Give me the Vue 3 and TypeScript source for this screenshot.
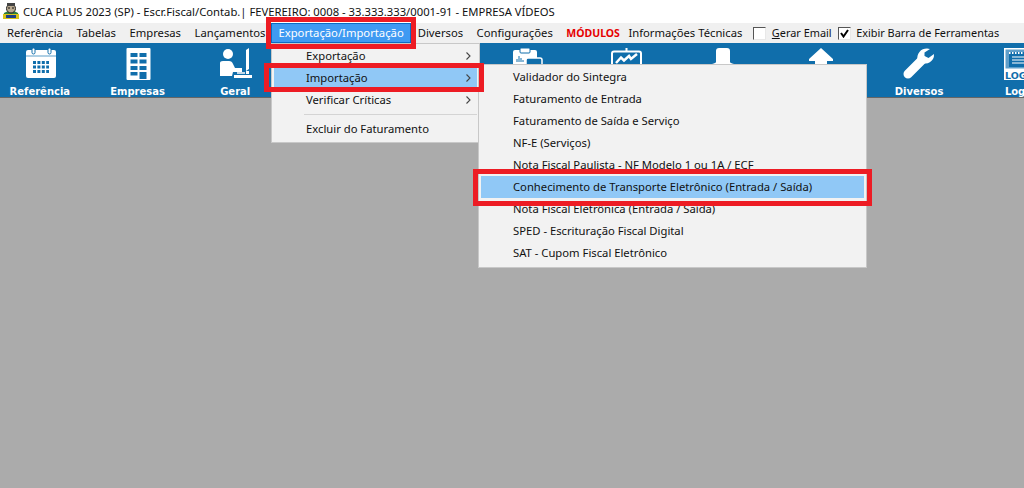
<script setup lang="ts">
const menus = ['Referência', 'Tabelas', 'Empresas', 'Lançamentos']
const sub = [
  'Validador do Sintegra',
  'Faturamento de Entrada',
  'Faturamento de Saída e Serviço',
  'NF-E (Serviços)',
  'Nota Fiscal Paulista - NF Modelo 1 ou 1A / ECF',
  'Conhecimento de Transporte Eletrônico (Entrada / Saída)',
  'Nota Fiscal Eletrônica (Entrada / Saída)',
  'SPED - Escrituração Fiscal Digital',
  'SAT - Cupom Fiscal Eletrônico',
]
const parent = [
  { label: 'Exportação', on: false },
  { label: 'Importação', on: true },
  { label: 'Verificar Críticas', on: false },
]
</script>

<template>
  <div class="app">
    <div class="title">
      <svg class="logo" width="18" height="18" viewBox="0 0 18 18">
        <path d="M1 16 L2 11 L6 9 H12 L16 11 L17 16 Z" fill="#2f7d3a" />
        <rect x="1" y="12" width="16" height="5" fill="#d8c21a" />
        <rect x="4" y="13" width="10" height="3" fill="#1c3f8a" />
        <circle cx="9" cy="6.5" r="4.5" fill="#b9a98f" stroke="#222" />
        <rect x="5" y="1" width="8" height="3" fill="#444" />
        <path d="M6 6h2M10 6h2" stroke="#111" />
      </svg>
      <span>CUCA PLUS 2023 (SP) - Escr.Fiscal/Contab.| FEVEREIRO: 0008 - 33.333.333/0001-91 - EMPRESA VÍDEOS</span>
    </div>

    <div class="menubar">
      <span v-for="m in menus" :key="m">{{ m }}</span>
      <span class="active">Exportação/Importação</span>
      <span>Diversos</span>
      <span>Configurações</span>
      <b class="mod">MÓDULOS</b>
      <span class="info">Informações Técnicas</span>
      <span class="box"></span>
      <span class="chk"><u>G</u>erar Email</span>
      <span class="box second">
        <svg width="9" height="9" viewBox="0 0 9 9"><path d="M1 4 L3.5 7.5 L8 1" fill="none" stroke="#000" stroke-width="2" /></svg>
      </span>
      <span class="chk">Exibir Barra de Ferramentas</span>
    </div>

    <div class="toolbar">
      <div class="tool">
        <svg viewBox="0 0 34 34">
          <rect x="3" y="3" width="30" height="28" rx="2" fill="#fff" />
          <rect x="3" y="8.500" width="30" height="1" fill="#5f9fca" />
          <rect x="9" y="1" width="3" height="6" rx="1.500" fill="#fff" stroke="#106eab" />
          <rect x="25" y="1" width="3" height="6" rx="1.500" fill="#fff" stroke="#106eab" />
          <path d="M10 15.500h16M10 20h16M10 24.500h16" stroke="#106eab" stroke-width="3" stroke-dasharray="3 1.400" />
        </svg>
        <span>Referência</span>
      </div>
      <div class="tool">
        <svg viewBox="0 0 34 34">
          <rect x="5.500" y="1" width="24" height="32" rx="1" fill="#fff" />
          <path d="M9.500 6h7v4h-7zM18.500 6h7v4h-7zM9.500 12.500h7v4h-7zM18.500 12.500h7v4h-7zM9.500 19h7v4h-7zM18.500 19h7v4h-7zM9.500 25h7v3.500h-7zM18.500 25h7v7h-7z" fill="#106eab" />
        </svg>
        <span>Empresas</span>
      </div>
      <div class="tool">
        <svg viewBox="0 0 34 34">
          <circle cx="10" cy="7" r="5" fill="#fff" />
          <path d="M2 16 Q2 14 5 14 H11 Q14 14 15 17 L17 21 H24 V25 H15 L14 29 H2 Z" fill="#fff" />
          <path d="M28 3 L31 1 V22 L28 24 Z" fill="#fff" />
          <rect x="28" y="24" width="3" height="3" fill="#fff" />
          <path d="M16 28 H34 V31 H16 Z" fill="#fff" />
          <path d="M19 26 H27" stroke="#fff" stroke-width="1.500" />
        </svg>
        <span>Geral</span>
      </div>
      <div class="tool"></div>
      <div class="tool"></div>
      <div class="tool">
        <svg viewBox="0 0 34 34">
          <rect x="2" y="3" width="24" height="26" rx="2" fill="#fff" />
          <rect x="9" y="1" width="10" height="5" rx="1" fill="#fff" stroke="#106eab" />
          <path d="M6 15v-3M8 15v-6M10 15v-4M12 15v-2" stroke="#106eab" />
          <rect x="15" y="11" width="16" height="14" rx="2" fill="#106eab" stroke="#fff" stroke-width="1.500" />
        </svg>
      </div>
      <div class="tool">
        <svg viewBox="0 0 34 34">
          <rect x="3" y="4.500" width="29" height="24" rx="2" fill="none" stroke="#fff" stroke-width="2" />
          <rect x="16.500" y="1" width="2" height="4" fill="#fff" />
          <path d="M7 16 L12 10.500 L15 13.500 L20 9 L22 12 L28 7" fill="none" stroke="#fff" stroke-width="2.500" />
        </svg>
      </div>
      <div class="tool">
        <svg viewBox="0 0 34 34">
          <path d="M9 15 V4 Q9 1 12 1 H20 Q23 1 23 4 V15 Q23 16 27 17 V20 H5 V17 Q9 16 9 15 Z" fill="#fff" />
        </svg>
      </div>
      <div class="tool">
        <svg viewBox="0 0 34 34">
          <path d="M17 1 L29 12 V14 H23 V20 H11 V14 H5 V12 Z" fill="#fff" />
        </svg>
      </div>
      <div class="tool">
        <svg viewBox="0 0 34 34">
          <path d="M6 27 L20 13" stroke="#fff" stroke-width="9" stroke-linecap="round" />
          <path d="M25 1.500 A9.500 9.500 0 0 0 15.500 13 A9.500 9.500 0 0 0 31 12 A9 9 0 0 0 32 7 L26.500 11 L22.500 9 L22.500 5.500 L28 2 A9 9 0 0 0 25 1.500 Z" fill="#fff" />
        </svg>
        <span>Diversos</span>
      </div>
      <div class="tool log">
        <svg viewBox="0 0 34 34">
          <path d="M4 1 H28 L34 6 V33 H4 Z" fill="#fff" />
          <path d="M5.500 2.500 H27 L32.500 7 V21.500 H5.500 Z" fill="#5f9fca" />
          <rect x="9" y="5" width="18" height="15" fill="#106eab" />
          <path d="M9 6h18" stroke="#fff" stroke-dasharray="1.500 1.500" stroke-width="2" />
          <path d="M12 10h12M12 13h12M12 16h12" stroke="#fff" />
          <text x="5" y="31.500" class="logtxt">LOG</text>
        </svg>
        <span>Log</span>
      </div>
    </div>

    <div class="desk"></div>

    <div class="menu m1">
      <div v-for="p in parent" :key="p.label" class="it" :class="{ on: p.on }">
        <span>{{ p.label }}</span>
        <svg width="5" height="8" viewBox="0 0 5 8"><path d="M0.500 0.500 L4 4 L0.500 7.500" fill="none" stroke="#444" stroke-width="1.100" /></svg>
      </div>
      <div class="sep"></div>
      <div class="it"><span>Excluir do Faturamento</span></div>
    </div>

    <div class="menu m2">
      <div v-for="s in sub" :key="s" class="it" :class="{ on: s.startsWith('Conhec') }">{{ s }}</div>
    </div>

    <div class="mark a"></div>
    <div class="mark b"></div>
    <div class="mark c"></div>
  </div>
</template>

<style scoped>
.app {
  width: 1024px;
  height: 488px;
  position: relative;
  overflow: hidden;
  font: 11.25px "Noto Sans", sans-serif;
  display: flex;
  flex-direction: column;
  color: #111;
}
.title {
  height: 23px;
  background: #fff;
  display: flex;
  align-items: center;
  gap: 3px;
  padding-left: 2px;
  padding-bottom: 1px;
  box-sizing: border-box;
}
.logo { flex: none; }
.menubar {
  height: 20px;
  background: #f0f0f0;
  display: flex;
  gap: 13.500px;
  padding: 0 0 1px 7px;
  box-sizing: border-box;
  align-items: center;
}
.mod { color: #e60000; font-size: 10.500px; margin-right: -5px; }
.info { margin-right: -3px; }
.chk { margin-left: -7.500px; font-size: 10.900px; white-space: nowrap; }
.box {
  width: 11px;
  height: 11px;
  flex: none;
  background: #fff;
  border: 1px solid;
  border-color: #555 #e8e8e8 #e8e8e8 #555;
  display: flex;
  align-items: center;
  justify-content: center;
  box-sizing: content-box;
  margin-top: 1px;
}
.second { margin-left: -7px; margin-right: -1px; }
.active {
  background: #3f9af2;
  border: 1px solid #0a6bc4;
  color: #fff;
  padding: 0 6px;
  margin: 0 -6.500px 0 -7.500px;
  height: 18px;
  line-height: 18px;
}
.toolbar {
  height: 54px;
  background: #106eab;
  border-bottom: 1px solid #666;
  display: flex;
  margin-left: -9px;
  overflow: hidden;
}
.tool {
  flex: 0 0 97.700px;
  display: flex;
  flex-direction: column;
  align-items: center;
  padding-top: 4px;
  box-sizing: border-box;
  color: #fff;
  font: bold 10px "DejaVu Sans", sans-serif;
}
.tool svg { width: 34px; height: 34px; overflow: visible; }
.tool span { margin-top: 4px; line-height: 14px; }
.log span { align-self: flex-start; margin-left: 37px; }
.logtxt { font: bold 9.500px "DejaVu Sans", sans-serif; fill: #106eab; }
.desk { flex: 1; background: #ababab; }
.menu {
  position: absolute;
  background: #f2f2f2;
  border: 1px solid #c8c8c8;
  box-sizing: border-box;
}
.m1 { left: 271px; top: 43px; width: 209px; height: 100px; padding: 1px 2px 0; }
.m2 { left: 478px; top: 64px; width: 389px; height: 204px; padding: 1px 2px 0; }
.it {
  height: 22px;
  line-height: 22px;
  padding: 0 6px 0 32px;
  display: flex;
  justify-content: space-between;
  align-items: center;
}
.on { background: #90c8f6; }
.sep { height: 1px; background: #d4d4d4; margin: 3px 0 3px 30px; }
.mark { position: absolute; border: 5px solid #ed1c24; box-sizing: border-box; }
.a { left: 266px; top: 17px; width: 150px; height: 32px; }
.b { left: 264px; top: 63px; width: 220px; height: 29px; }
.c { left: 473px; top: 169px; width: 399px; height: 37px; }
</style>
